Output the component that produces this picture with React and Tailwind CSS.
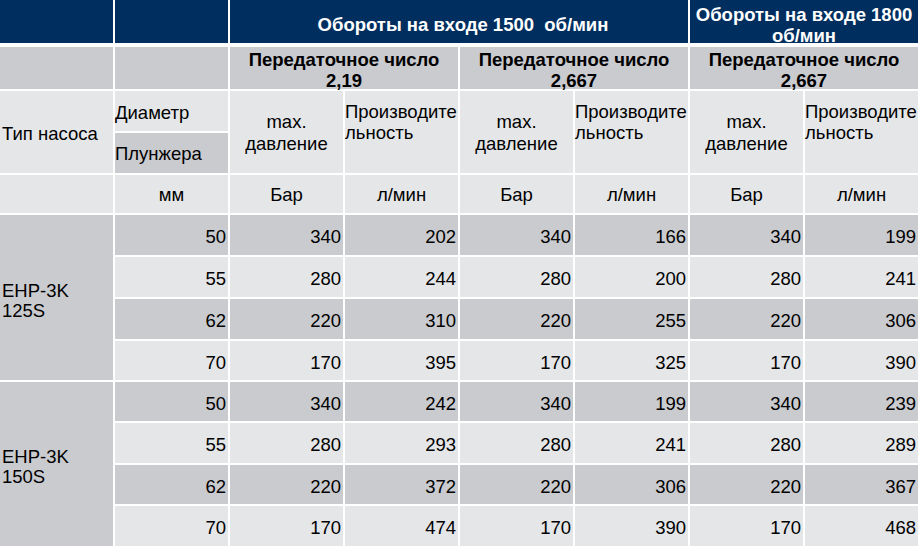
const NAVY = 'bg-[#002f5f]'
const DARK = 'bg-[#cacbcf]'
const LIGHT = 'bg-[#e5e6e8]'

const groups = [
  {
    name: ['EHP-3K', '125S'],
    rows: [
      [50, 340, 202, 340, 166, 340, 199],
      [55, 280, 244, 280, 200, 280, 241],
      [62, 220, 310, 220, 255, 220, 306],
      [70, 170, 395, 170, 325, 170, 390],
    ],
  },
  {
    name: ['EHP-3K', '150S'],
    rows: [
      [50, 340, 242, 340, 199, 340, 239],
      [55, 280, 293, 280, 241, 280, 289],
      [62, 220, 372, 220, 306, 220, 367],
      [70, 170, 474, 170, 390, 170, 468],
    ],
  },
]

function Head({ className = '', children }) {
  return (
    <div className={`${NAVY} mb-[2px] flex items-center justify-center text-center text-white font-bold leading-[21px] pt-[6px] ${className}`}>
      {children}
    </div>
  )
}

function Ratio({ value }) {
  return (
    <div className={`${DARK} col-span-2 flex items-center justify-center text-center font-bold leading-[21px] pt-[3px]`}>
      <span>Передаточное число<br />{value}</span>
    </div>
  )
}

function PressureHead() {
  return (
    <div className={`${LIGHT} row-span-2 flex items-center justify-center text-center leading-[22px] pt-[2px]`}>
      <span>max.<br />давление</span>
    </div>
  )
}

function FlowHead() {
  return (
    <div className={`${LIGHT} row-span-2 pt-[10px] leading-[21px] whitespace-nowrap`}>
      Производите<br />льность
    </div>
  )
}

function Unit({ children }) {
  return <div className={`${LIGHT} flex items-center justify-center pt-[2px]`}>{children}</div>
}

export default function App() {
  return (
    <div className="w-[918px] h-[546px] bg-white overflow-hidden font-['Liberation_Sans',Arial,sans-serif] text-[18.5px] text-black">
      <div className="grid grid-cols-[repeat(8,113px)] grid-rows-[45px_42px_40px_40px_38px_40px_40px_40px_39px_39px_40px_39px_40px] gap-[2px]">

        {/* Row 1: speed headers */}
        <Head />
        <Head />
        <Head className="col-span-4 whitespace-pre pl-[8px]">{'Обороты на входе 1500  об/мин'}</Head>
        <Head className="col-span-2">
          <span>Обороты на входе 1800<br />об/мин</span>
        </Head>

        {/* Row 2: gear ratios */}
        <div className={DARK} />
        <div className={DARK} />
        <Ratio value="2,19" />
        <Ratio value="2,667" />
        <Ratio value="2,667" />

        {/* Row 3: column titles */}
        <div className={`${LIGHT} row-span-2 flex items-center pl-[2px] pt-[4px]`}>Тип насоса</div>
        <div className={`${LIGHT} flex items-center pt-[3px]`}>Диаметр</div>
        <PressureHead />
        <FlowHead />
        <PressureHead />
        <FlowHead />
        <PressureHead />
        <FlowHead />
        <div className={`${DARK} flex items-center pt-[1px]`}>Плунжера</div>

        {/* Row 4: units */}
        <div className={LIGHT} />
        <Unit>мм</Unit>
        <Unit>Бар</Unit>
        <Unit>л/мин</Unit>
        <Unit>Бар</Unit>
        <Unit>л/мин</Unit>
        <Unit>Бар</Unit>
        <Unit>л/мин</Unit>

        {/* Data */}
        {groups.map((g, gi) => [
          <div key={`n${gi}`} className={`${DARK} row-span-4 flex items-center pl-[2px] pt-[6px] leading-[20px]`}>
            <span>{g.name[0]}<br />{g.name[1]}</span>
          </div>,
          ...g.rows.flatMap((r, ri) =>
            r.map((v, ci) => (
              <div
                key={`${gi}-${ri}-${ci}`}
                className={`${ri % 2 === 0 ? DARK : LIGHT} flex items-center justify-end pr-[2px] pt-[4px]`}
              >
                {v}
              </div>
            ))
          ),
        ])}
      </div>
    </div>
  )
}
